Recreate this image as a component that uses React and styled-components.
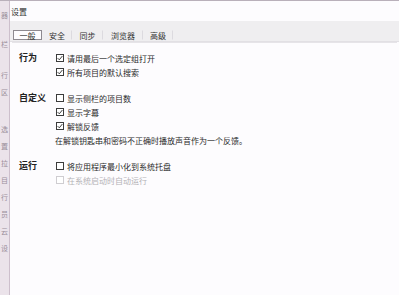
import React from "react";
import styled, { createGlobalStyle } from "styled-components";

const GlobalStyle = createGlobalStyle`
  html, body {
    margin: 0;
    padding: 0;
    width: 399px;
    height: 295px;
    overflow: hidden;
    background: #fdfcfe;
  }
  body {
    font-family: "Noto Sans CJK SC", "Noto Sans", sans-serif;
    color: #2a2a2a;
  }
`;

const Screen = styled.div`
  display: flex;
  width: 399px;
  height: 295px;
  border-top: 1px solid #b9b0ba;
  box-sizing: border-box;
`;

const SideStrip = styled.div`
  width: 9px;
  flex-shrink: 0;
  background: #ebe3ea;
  border-right: 1px solid #cdbfcc;
  overflow: hidden;
  display: flex;
  flex-direction: column;
  align-items: center;
  padding-top: 10px;
  gap: 9px;
`;

const StripGlyph = styled.span`
  font-size: 7px;
  line-height: 8px;
  color: #9a8f9a;
  margin-top: ${(p) => p.$top || 0}px;
`;

const Window = styled.div`
  flex: 1;
  display: flex;
  flex-direction: column;
  background: #fdfcfe;
`;

const TitleBar = styled.div`
  height: 20px;
  display: flex;
  align-items: center;
  padding-left: 1px;
  font-size: 8px;
  color: #333;
`;

const TabStrip = styled.div`
  height: 19px;
  background: #efeef0;
  border-bottom: 1px solid #e2e0e4;
  box-shadow: 0 3px 0 -2px #e6e4e8;
  display: flex;
  align-items: flex-end;
  padding-left: 3px;
  padding-bottom: 1px;
`;

const Tab = styled.div`
  height: 10px;
  width: ${(p) => p.$w}px;
  display: flex;
  align-items: center;
  justify-content: center;
  font-size: 8px;
  color: #333;
  box-sizing: border-box;
  background: ${(p) => (p.$active ? "#fdfcfe" : "transparent")};
  border: 1px solid ${(p) => (p.$active ? "#8e8a90" : "transparent")};
  border-right: 1px solid ${(p) => (p.$active ? "#8e8a90" : "#dcdadf")};
`;

const Body = styled.div`
  padding: 9px 0 0 9px;
  display: flex;
  flex-direction: column;
  gap: 12px;
`;

const Section = styled.div`
  display: grid;
  grid-template-columns: 37px 1fr;
`;

const SectionLabel = styled.div`
  font-size: 9px;
  font-weight: bold;
  line-height: 14px;
  color: #222;
`;

const Rows = styled.div`
  display: flex;
  flex-direction: column;
`;

const Row = styled.div`
  height: 14px;
  display: flex;
  align-items: center;
  gap: 3px;
  font-size: 8px;
  color: ${(p) => (p.$disabled ? "#b4b2b6" : "#2a2a2a")};
`;

const Box = styled.span`
  width: 8px;
  height: 8px;
  box-sizing: border-box;
  border: 1px solid ${(p) => (p.$disabled ? "#cfcdd1" : "#3c3c3c")};
  background: #fff;
  display: flex;
  align-items: center;
  justify-content: center;
  flex-shrink: 0;
`;

const Note = styled.div`
  height: 14px;
  display: flex;
  align-items: center;
  font-size: 8px;
  color: #2a2a2a;
  margin-left: -1px;
`;

function Checkbox({ checked, disabled, label }) {
  return (
    <Row $disabled={disabled}>
      <Box $disabled={disabled}>
        {checked && (
          <svg width="6" height="6" viewBox="0 0 6 6">
            <path d="M0.6 3.1 L2.3 4.8 L5.4 1" fill="none" stroke="#2a2a2a" strokeWidth="0.9" />
          </svg>
        )}
      </Box>
      {label}
    </Row>
  );
}

const tabs = [
  { label: "一般", w: 29, active: true },
  { label: "安全", w: 30 },
  { label: "同步", w: 31 },
  { label: "浏览器", w: 40 },
  { label: "高级", w: 30 },
];

const stripGlyphs = [
  { ch: "器", top: 0 },
  { ch: "栏", top: 12 },
  { ch: "行", top: 14 },
  { ch: "区", top: 0 },
  { ch: "选", top: 20 },
  { ch: "置", top: 0 },
  { ch: "拉", top: 0 },
  { ch: "目", top: 0 },
  { ch: "行", top: 0 },
  { ch: "员", top: 0 },
  { ch: "云", top: 0 },
  { ch: "设", top: 0 },
];

export default function App() {
  return (
    <>
      <GlobalStyle />
      <Screen>
        <SideStrip>
          {stripGlyphs.map((g, i) => (
            <StripGlyph key={i} $top={g.top}>
              {g.ch}
            </StripGlyph>
          ))}
        </SideStrip>
        <Window>
          <TitleBar>设置</TitleBar>
          <TabStrip>
            {tabs.map((t) => (
              <Tab key={t.label} $w={t.w} $active={t.active}>
                {t.label}
              </Tab>
            ))}
          </TabStrip>
          <Body>
            <Section>
              <SectionLabel>行为</SectionLabel>
              <Rows>
                <Checkbox checked label="请用最后一个选定组打开" />
                <Checkbox checked label="所有项目的默认搜索" />
              </Rows>
            </Section>
            <Section>
              <SectionLabel>自定义</SectionLabel>
              <Rows>
                <Checkbox label="显示侧栏的项目数" />
                <Checkbox checked label="显示字幕" />
                <Checkbox checked label="解锁反馈" />
                <Note>在解锁钥匙串和密码不正确时播放声音作为一个反馈。</Note>
              </Rows>
            </Section>
            <Section>
              <SectionLabel>运行</SectionLabel>
              <Rows>
                <Checkbox label="将应用程序最小化到系统托盘" />
                <Checkbox disabled label="在系统启动时自动运行" />
              </Rows>
            </Section>
          </Body>
        </Window>
      </Screen>
    </>
  );
}
